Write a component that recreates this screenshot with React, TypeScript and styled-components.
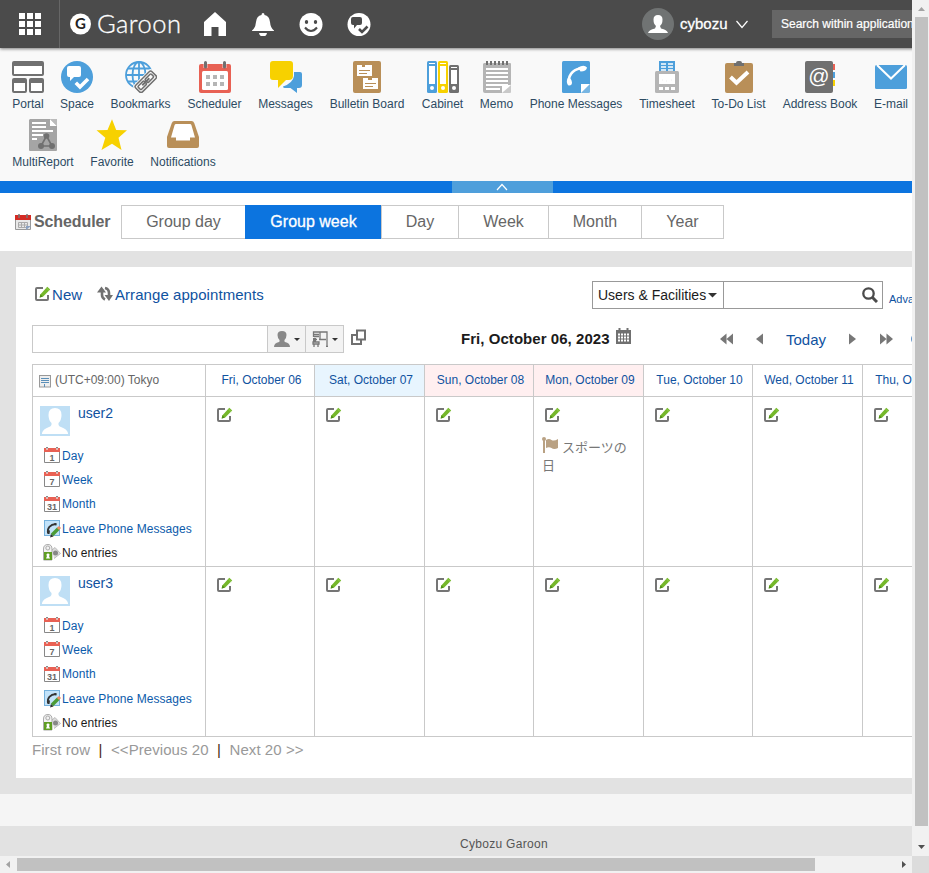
import React from "react";
import styled, { createGlobalStyle } from "styled-components";

const GlobalStyle = createGlobalStyle`
  * { box-sizing: border-box; }
  body { margin: 0; overflow: hidden; }
  svg { display: block; flex: none; }
`;

const Window = styled.div`
  width: 929px;
  height: 873px;
  display: grid;
  grid-template-columns: 912px 17px;
  grid-template-rows: 856px 17px;
  font-family: "Liberation Sans", Arial, "Noto Sans CJK JP", sans-serif;
  font-size: 12px;
  color: #1b1b1b;
  white-space: nowrap;
`;
const Page = styled.div`
  overflow: hidden;
  background: #f5f5f5;
`;

/* ---------- header ---------- */
const Header = styled.header`
  height: 48px;
  width: 1100px;
  display: flex;
  align-items: center;
  background: #4b4b4b;
  box-shadow: 0 1px 3px rgba(0, 0, 0, 0.5);
  position: relative;
`;
const AppsButton = styled.div`
  width: 60px;
  height: 48px;
  border-right: 1px solid #666;
  display: flex;
  align-items: center;
  justify-content: center;
`;
const Logo = styled.div`
  width: 133px;
  padding-left: 10px;
`;
const HeaderIcons = styled.div`
  display: flex;
  gap: 24px;
  padding-left: 10px;
  width: 449px;
`;
const UserName = styled.div`
  font-size: 15px;
  color: #fff;
  -webkit-text-stroke: 0.3px #fff;
  margin: 0 8px 0 6px;
  width: 48px;
  padding-bottom: 1px;
`;
const HeaderSearch = styled.div`
  height: 28px;
  width: 250px;
  margin-left: 24px;
  padding-left: 9px;
  line-height: 28px;
  background: #666;
  color: #fff;
  -webkit-text-stroke: 0.2px #fff;
`;

/* ---------- application menu ---------- */
const AppMenu = styled.nav`
  height: 133px;
  padding: 13px 0 0 4px;
  background: #f9f9f9;
`;
const AppRow = styled.div`
  display: flex;
  height: 58px;
`;
const AppItem = styled.div<{ $w: number }>`
  width: ${(p) => p.$w}px;
  flex: none;
  display: flex;
  flex-direction: column;
  align-items: center;
  color: #2d4b63;
  line-height: 14px;
  gap: 4px;
`;
const BlueBar = styled.div`
  height: 12px;
  background: #0c74df;
  padding-left: 452px;
`;
const Collapse = styled.div`
  width: 101px;
  height: 12px;
  background: #4f9fdb;
  display: flex;
  align-items: center;
  justify-content: center;
  padding-right: 2px;
`;

/* ---------- tabs ---------- */
const TitleBar = styled.div`
  height: 58px;
  display: flex;
  align-items: center;
  background: #fff;
  padding: 0 0 0 15px;
`;
const Title = styled.h1`
  width: 106px;
  margin: 0;
  display: flex;
  align-items: center;
  gap: 3px;
  font-size: 16px;
  letter-spacing: -0.1px;
  color: #666;
`;
const Tabs = styled.div`
  display: flex;
  height: 34px;
  border-right: 1px solid #c9c9c9;
`;
const Tab = styled.div<{ $w: number; $active?: boolean }>`
  width: ${(p) => p.$w}px;
  border: 1px solid ${(p) => (p.$active ? "#0c74df" : "#c9c9c9")};
  border-right: 0;
  background: ${(p) => (p.$active ? "#0c74df" : "#fff")};
  color: ${(p) => (p.$active ? "#fff" : "#666")};
  -webkit-text-stroke: ${(p) => (p.$active ? "0.3px #fff" : "0")};
  font-size: 16px;
  line-height: 32px;
  text-align: center;
`;

/* ---------- content ---------- */
const Body = styled.main`
  height: 543px;
  padding: 16px 0 0 16px;
  background: #e2e2e2;
`;
const Panel = styled.section`
  width: 1100px;
  height: 511px;
  padding: 14px 0 0 16px;
  background: #fff;
`;
const Row = styled.div<{ $h: number }>`
  display: flex;
  align-items: center;
  height: ${(p) => p.$h}px;
`;
const Action = styled.a<{ $w: number; $indent?: number }>`
  display: flex;
  align-items: center;
  gap: ${(p) => (p.$indent ? 1 : 2)}px;
  width: ${(p) => p.$w}px;
  padding: 0 0 2px ${(p) => p.$indent || 0}px;
  font-size: 15px;
  letter-spacing: 0.06px;
  color: #10529f;
`;
const SearchBox = styled.div`
  display: flex;
  width: 291px;
  height: 28px;
  border: 1px solid #999;
  margin-right: 6px;
`;
const SearchScope = styled.div`
  width: 131px;
  border-right: 1px solid #999;
  padding-left: 5px;
  display: flex;
  align-items: center;
  gap: 2px;
  font-size: 14px;
`;
const SearchField = styled.div`
  flex: 1;
  display: flex;
  justify-content: flex-end;
  padding: 5px 4px;
`;
const Advanced = styled.a`
  font-size: 11px;
  color: #10529f;
  padding-top: 8px;
`;
const Picker = styled.div`
  display: flex;
  width: 312px;
  height: 28px;
  border: 1px solid #c9c9c9;
  margin-right: 7px;
`;
const PickerInput = styled.div`
  flex: 1;
`;
const PickerButton = styled.div`
  width: 38px;
  border-left: 1px solid #c9c9c9;
  background: #f3f3f3;
  display: flex;
  align-items: center;
  justify-content: center;
  gap: 4px;
`;
const DateTitle = styled.h2`
  margin: 0 6px 2px 95px;
  width: 149px;
  font-size: 15px;
  letter-spacing: 0.05px;
`;
const WeekNav = styled.div`
  display: flex;
  align-items: center;
  margin-left: 88px;
  font-size: 15px;
  color: #10529f;
`;
const Today = styled.a`
  width: 86px;
  text-align: center;
  font-size: 15px;
  padding-top: 1px;
`;
const NavIcon = styled.div<{ $w: number }>`
  width: ${(p) => p.$w}px;
`;

const Calendar = styled.div`
  display: grid;
  grid-template-columns: 173px 109px 110px 109px 110px 109px 110px 109px 110px;
  grid-template-rows: 32px 170px 170px;
  border-bottom: 1px solid #c9c9c9;
  width: 1050px;
  margin-top: -5px;
`;
const HeadCell = styled.div<{ $tone?: string }>`
  border-left: 1px solid #c9c9c9;
  border-top: 1px solid #c9c9c9;
  background: ${(p) => p.$tone || "#fff"};
  color: #10529f;
  line-height: 30px;
  padding-left: 3px;
  text-align: center;
`;
const ZoneCell = styled(HeadCell)`
  display: flex;
  align-items: center;
  gap: 4px;
  padding-left: 6px;
  color: #666;
  line-height: 28px;
  padding-bottom: 1px;
  & svg { margin-top: 2px; }
`;
const Cell = styled.div`
  border-left: 1px solid #c9c9c9;
  border-top: 1px solid #c9c9c9;
  padding: 10px 8px 0 11px;
`;
const UserCell = styled(Cell)`
  padding: 9px 0 0 7px;
`;
const UserHead = styled.div`
  display: flex;
  gap: 8px;
  height: 37px;
  font-size: 14px;
  line-height: 15px;
  color: #10529f;
`;
const UserLink = styled.div<{ $plain?: boolean }>`
  display: flex;
  align-items: center;
  gap: 1px;
  height: 24.3px;
  padding: 1px 0 0 ${(p) => (p.$plain ? 3 : 4)}px;
  letter-spacing: 0.05px;
  color: ${(p) => (p.$plain ? "#1b1b1b" : "#0c5bab")};
`;
const Holiday = styled.div`
  margin: 14px 0 0 -3px;
  color: #777;
  font-size: 13px;
  line-height: 18px;
  white-space: normal;
  & svg { display: inline-block; vertical-align: -1px; margin-right: 3px; }
`;
const Pager = styled.div`
  display: flex;
  height: 26px;
  line-height: 26px;
  font-size: 15px;
  letter-spacing: 0.06px;
  color: #999;
`;
const Bar = styled.span`
  width: 21px;
  text-align: center;
  color: #4a2a10;
`;
const Footer = styled.footer`
  margin-top: 32px;
  height: 30px;
  padding-left: 460px;
  line-height: 37px;
  font-size: 12px;
  letter-spacing: 0.3px;
  background: #e2e2e2;
  color: #555;
`;

/* ---------- scroll bars ---------- */
const VBar = styled.div`
  background: #f1f1f1;
  display: flex;
  flex-direction: column;
  align-items: center;
  justify-content: space-between;
  padding-left: 1px;
`;
const VThumb = styled.div`
  width: 13px;
  height: 809px;
  background: #c1c1c1;
`;
const HBar = styled.div`
  background: #f1f1f1;
  display: flex;
  align-items: center;
`;
const HThumb = styled.div`
  width: 798px;
  height: 13px;
  background: #c1c1c1;
`;
const Corner = styled.div`
  background: #dcdcdc;
`;

/* ---------- icons ---------- */
const Svg = ({ w = 32, h = 32, children }: { w?: number; h?: number; children: React.ReactNode }) => (
  <svg width={w} height={h} viewBox={`0 0 ${w} ${h}`} fill="none">{children}</svg>
);

const Caret = ({ w = 6, c = "#333" }) => (
  <Svg w={w} h={Math.ceil(w / 2)}><path d={`M0 0H${w}L${w / 2} ${w / 2}z`} fill={c} /></Svg>
);

const Edit = () => (
  <Svg w={16} h={16}>
    <path d="M8 2H2Q1 2 1 3V13Q1 14 2 14H12Q13 14 13 13V9" stroke="#757575" strokeWidth="2" />
    <path d="M5.500 8.200L12.300 .8L15.200 3.500L8.200 10.500L4.600 11.500z" fill="#75b82a" />
    <path d="M5.500 8.200L7.800 10.700L4.600 11.500z" fill="#4e8d16" />
    <path d="M11.200 1.800L14.200 4.700" stroke="#a0d368" strokeWidth=".7" />
  </Svg>
);

const portal = (
  <Svg>
    <g stroke="#707070" strokeWidth="2">
      <rect x="1" y="1" width="30" height="13" rx="1" /><path d="M1 3H31" strokeWidth="4" />
      <rect x="1" y="18" width="13" height="13" rx="1" /><path d="M1 20H14" strokeWidth="4" />
      <rect x="18" y="18" width="13" height="13" rx="1" /><path d="M18 20H31" strokeWidth="4" />
    </g>
    <path d="M2 5H30V13H2zM2 22H13V30H2zM19 22H30V30H19z" fill="#fff" />
  </Svg>
);
const space = (
  <Svg>
    <circle cx="16" cy="16" r="16" fill="#4d9fdb" />
    <path d="M8 5H18Q20 5 20 7V14Q20 16 18 16H13L9 20V16H8Q6 16 6 14V7Q6 5 8 5z" fill="#fff" />
    <path d="M14.800 21.800L19 26L27 18" stroke="#fff" strokeWidth="3.600" />
  </Svg>
);
const bookmarks = (
  <Svg>
    <g stroke="#4d9fdb" strokeWidth="1.800">
      <circle cx="14" cy="14" r="13" /><ellipse cx="14" cy="14" rx="6.500" ry="13" />
      <path d="M14 1V27M1 14H27M3 7.500H25M3 20.500H20" />
    </g>
    <g transform="rotate(-45 21 21)">
      <rect x="8" y="14.500" width="26" height="12" rx="2.500" fill="#f9f9f9" />
      <g stroke="#707070" strokeWidth="1.500">
        <rect x="9.500" y="16" width="23" height="9.500" rx="2" />
        <rect x="11.800" y="18.400" width="8.500" height="4.600" rx="1" /><rect x="21.800" y="18.400" width="8.500" height="4.600" rx="1" />
        <path d="M16 20.700H26" strokeWidth="2" />
      </g>
    </g>
  </Svg>
);
const scheduler = (
  <Svg>
    <rect y="3" width="32" height="29" rx="2" fill="#e86154" />
    <rect x="3" y="10" width="26" height="19" rx="1.500" fill="#fff" />
    <path d="M6.500 0V7M25.500 0V7" stroke="#f9f9f9" strokeWidth="4.500" opacity=".5" />
    <path d="M6.500 1.500V6M25.500 1.500V6" stroke="#707070" strokeWidth="3" strokeLinecap="round" />
    <path d="M7 14h4v4H7zM14 14h4v4h-4zM21 14h4v4h-4zM7 21h4v4H7zM14 21h4v4h-4zM21 21h4v4h-4z" fill="#b5b5b5" />
  </Svg>
);
const messages = (
  <Svg>
    <path d="M24 11H30Q32 11 32 13V24Q32 27 29 27H27V32L20.500 27H16Q13 27 13 25.500Q23 22 24 15z" fill="#4d9fdb" />
    <path d="M3 0H20Q23 0 23 3V15Q23 19 19 19H16L8 27V19H3Q0 19 0 16V3Q0 0 3 0z" fill="#f7d100" />
  </Svg>
);
const bulletin = (
  <Svg w={28}>
    <rect width="28" height="32" rx="2" fill="#b98f58" />
    <path d="M4 4H9V6H12V4H19V15H4zM10 17H15V19H19V17H25V28H10z" fill="#fff" />
    <path d="M6 9.500H17M6 12.500H14M12 22.500H23M12 25.500H20" stroke="#b98f58" />
  </Svg>
);
const binder = (x: number, y: number, c: string) => (
  <g key={x}>
    <rect x={x} y={y} width="10" height={32 - y} rx="1.500" fill={c} />
    <path d={`M${x + 2} ${y + 2.5}h6`} stroke="#fff" />
    <path d={`M${x + 2} ${y + 5}h6V23h-6z`} fill="#fff" />
    <circle cx={x + 5} cy="27" r="2" fill="#fff" />
  </g>
);
const cabinet = <Svg>{binder(0, 0, "#4d9fdb")}{binder(11, 0, "#f7d100")}{binder(22, 4, "#707070")}</Svg>;
const memo = (
  <Svg w={28}>
    <path d="M1 2H27Q28 2 28 3V24L20 32H2Q0 32 0 30V3z" fill="#b5b5b5" />
    <path d="M19 32L28 23V31Q28 32 27 32z" fill="#c9c9c9" />
    <path d="M28 24L19 32V25Q19 24 20 24z" fill="#fff" />
    <path d="M3 8H25M3 12H25M3 16H25M3 20H25M3 24H25M3 28H17" stroke="#fff" strokeWidth="2" />
    <path d="M4 0V4M8 0V4M12 0V4M16 0V4M20 0V4M24 0V4" stroke="#707070" strokeWidth="2" />
  </Svg>
);
const phone = (
  <Svg w={28}>
    <rect width="28" height="32" rx="1.500" fill="#4d9fdb" />
    <path d="M6.500 21C7 13 12 7.500 22 7" stroke="#fff" strokeWidth="2.600" />
    <path d="M16 6.500Q22 3 25 6.500Q24.500 10.500 18.500 10.500zM5.500 17.500Q9 15.500 10 21.500Q10 25 6.500 24.500Q3.800 22 5.500 17.500z" fill="#fff" />
    <path d="M19 23H28L19 32z" fill="#fff" /><path d="M28 23V32H19z" fill="#f9f9f9" opacity=".25" />
  </Svg>
);
const timesheet = (
  <Svg w={24}>
    <path d="M4 0H20V10H4z" fill="#4d9fdb" />
    <path d="M6 3H11M13 3H18M6 6H11M13 6H18M6 9H11M13 9H18" stroke="#fff" strokeWidth="1.500" />
    <rect y="10" width="24" height="22" rx="1.500" fill="#b5b5b5" />
    <path d="M4 13H20V23H4zM4 26h4v3H4zM10 26h4v3h-4zM16 26h4v3h-4z" fill="#fff" />
    <path d="M7 19h1M11 20h1M16 19h1" stroke="#eee" />
  </Svg>
);
const todo = (
  <Svg w={28}>
    <rect y="2" width="28" height="30" rx="2" fill="#b98f58" />
    <path d="M9 2H11Q11 0 13 0H15Q17 0 17 2H19V5H9z" fill="#707070" />
    <path d="M5.500 16L11.500 21.700L23 11" stroke="#fff" strokeWidth="4" />
  </Svg>
);
const AtText = styled.text`
  font: 21px "Liberation Sans", sans-serif;
  fill: #fff;
`;
const address = (
  <Svg w={30}>
    <path d="M27 3h3v6h-3z" fill="#e86154" /><path d="M27 11h3v6h-3z" fill="#4d9fdb" /><path d="M27 19h3v6h-3z" fill="#f7d100" />
    <rect width="28" height="32" rx="2" fill="#707070" />
    <AtText x="14" y="22" textAnchor="middle">@</AtText>
  </Svg>
);
const email = (
  <Svg>
    <rect y="4" width="32" height="24" rx="1.500" fill="#4d9fdb" />
    <path d="M2 4L16 17.500L30 4" stroke="#fff" strokeWidth="2" />
  </Svg>
);
const multireport = (
  <Svg w={28}>
    <path d="M1 0H28V31Q28 32 27 32H1Q0 32 0 31V1z" fill="#a5a5a5" />
    <path d="M21 0V7H28z" fill="#fff" /><path d="M21 0H28V7z" fill="#bbb" />
    <path d="M3 4H17M3 8H17M3 12H24M3 16H14M3 20H8" stroke="#fff" strokeWidth="2" />
    <path d="M17.500 17L12 27H23z" stroke="#707070" strokeWidth="1.600" />
    <g fill="#707070"><circle cx="17.500" cy="17" r="2.800" /><circle cx="12" cy="27" r="3" /><circle cx="23" cy="27" r="3" /></g>
  </Svg>
);
const favorite = (
  <Svg><path d="M16 .3L20.200 11L31 11.300L22.500 18.800L25.500 31L16 24.800L5.500 31L9.300 18.800L.5 11.300L11.500 11z" fill="#f7d100" /></Svg>
);
const notifications = (
  <Svg>
    <path d="M7.500 2H24.500Q26.500 2 27.200 4L32 18V27Q32 29 30 29H2Q0 29 0 27V18L4.800 4Q5.500 2 7.500 2z" fill="#b98f58" />
    <path d="M9 5H23Q24 5 24.400 6L28 18.500H23V21.500H9V18.500H4L7.600 6Q8 5 9 5z" fill="#fff" />
  </Svg>
);

const appRows: [string, number, React.ReactNode][][] = [
  [
    ["Portal", 48, portal], ["Space", 50, space], ["Bookmarks", 77, bookmarks], ["Scheduler", 71, scheduler],
    ["Messages", 71, messages], ["Bulletin Board", 92, bulletin], ["Cabinet", 59, cabinet], ["Memo", 49, memo],
    ["Phone Messages", 110, phone], ["Timesheet", 72, timesheet], ["To-Do List", 71, todo],
    ["Address Book", 92, address], ["E-mail", 50, email],
  ],
  [["MultiReport", 78, multireport], ["Favorite", 60, favorite], ["Notifications", 82, notifications]],
];

const LogoText = styled.text`
  font: 300 25.500px Lato, sans-serif;
  fill: #fff;
  stroke: #fff;
  stroke-width: 0.3px;
`;
const LogoMark = styled.text`
  font: bold 15px Lato, sans-serif;
  fill: #222;
`;
const GaroonLogo = () => (
  <Svg w={114} h={32}>
    <circle cx="10.500" cy="16" r="10.500" fill="#fff" />
    <LogoMark x="10.500" y="21.300" textAnchor="middle">G</LogoMark>
    <LogoText x="27" y="25" textLength="84">Garoon</LogoText>
  </Svg>
);

const Avatar = () => (
  <Svg w={30} h={30}>
    <rect width="30" height="30" fill="#bfdff5" />
    <path d="M2 30V27Q3 23 9 21Q12 20 11.500 17Q8.500 14 8.500 9Q8.500 2 15 2Q21.500 2 21.500 9Q21.500 14 18.500 17Q18 20 21 21Q27 23 28 27V30z" fill="#fff" />
    <path d="M0 28H30V30H0z" fill="#bfdff5" />
  </Svg>
);

const MiniText = styled.text<{ $size: number }>`
  font: bold ${(p) => p.$size}px "Liberation Sans", sans-serif;
  fill: #666;
`;
const MiniCal = ({ n }: { n: string }) => (
  <Svg w={17} h={17}>
    <path d="M.5 3V15.500H15.500V3" stroke="#888" fill="#fff" />
    <path d="M0 1H16V5H0z" fill="#e86154" />
    <path d="M3 0V2M13 0V2" stroke="#888" strokeWidth="2" /><path d="M3 1V3M13 1V3" stroke="#fff" />
    <MiniText $size={9} x="8" y="13.800" textAnchor="middle">{n}</MiniText>
  </Svg>
);
const LeavePhone = () => (
  <Svg w={17} h={18}>
    <rect x=".5" y=".5" width="15" height="15" fill="#c3e3fa" stroke="#76b1dc" />
    <path d="M4 13C3 8 6 4.500 12 4" stroke="#333" strokeWidth="1.800" /><path d="M10 3L13 3.500L12 6zM3 10L6 10.500L5.500 14L3.500 14z" fill="#333" />
    <path d="M8 15L14.500 8.500" stroke="#4b9b38" strokeWidth="3.500" /><path d="M14 9L16 7" stroke="#ef8b63" strokeWidth="3" />
    <path d="M6 17.500L7 14L9.500 16.500z" fill="#333" />
  </Svg>
);
const Presence = () => (
  <Svg w={18} h={17}>
    <path d="M9 6L12 3.500L17.500 9.500L11 14.500" fill="#ddd" stroke="#bbb" /><circle cx="12.500" cy="9" r="2.500" fill="#888" />
    <path d="M.5 16V5Q.5 .5 5 .5Q9 .5 9 5V16z" fill="#f2f2f2" stroke="#aaa" />
    <circle cx="4.800" cy="4" r="2" stroke="#aaa" />
    <rect x="1" y="8" width="8" height="8" fill="#5f9e22" />
    <path d="M5 9.500A1.400 1.400 0 0 1 6 12L7 14.500H3L4 12A1.400 1.400 0 0 1 5 9.500z" fill="#fff" />
  </Svg>
);

const PersonShape = ({ c }: { c: string }) => (
  <path d="M0 16Q0 12 5 11Q6 10.500 5.500 9Q3.500 7 3.500 4Q3.500 0 8 0Q12.500 0 12.500 4Q12.500 7 10.500 9Q10 10.500 11 11Q16 12 16 16z" fill={c} />
);

const days: [string, string?][] = [
  ["Fri, October 06"], ["Sat, October 07", "#e8f5fe"], ["Sun, October 08", "#ffeff0"], ["Mon, October 09", "#ffeff0"],
  ["Tue, October 10"], ["Wed, October 11"], ["Thu, October 12"], ["Fri, October 13"],
];

const UserRow = ({ name, holiday }: { name: string; holiday?: number }) => (
  <>
    <UserCell>
      <UserHead><Avatar />{name}</UserHead>
      <UserLink><MiniCal n="1" />Day</UserLink>
      <UserLink><MiniCal n="7" />Week</UserLink>
      <UserLink><MiniCal n="31" />Month</UserLink>
      <UserLink><LeavePhone />Leave Phone Messages</UserLink>
      <UserLink $plain><Presence />No entries</UserLink>
    </UserCell>
    {days.map(([d], i) => (
      <Cell key={d}>
        <Edit />
        {holiday === i && (
          <Holiday>
            <Svg w={17} h={16}>
              <path d="M2 2V16" stroke="#b9a183" strokeWidth="2" /><circle cx="2" cy="2" r="2" fill="#b9a183" />
              <path d="M4 3Q7 1 9.500 3Q12 4.500 16 2V11Q12 13 9.500 11Q7 9.500 4 11z" fill="#b9a183" />
            </Svg>
            スポーツの日
          </Holiday>
        )}
      </Cell>
    ))}
  </>
);

export default function App() {
  return (
    <>
      <GlobalStyle />
      <Window>
        <Page>
          <Header>
            <AppsButton>
              <Svg w={22} h={22}>
                <path d="M0 0h6v6H0zM8 0h6v6H8zM16 0h6v6h-6zM0 8h6v6H0zM8 8h6v6H8zM16 8h6v6h-6zM0 16h6v6H0zM8 16h6v6H8zM16 16h6v6h-6z" fill="#fff" />
              </Svg>
            </AppsButton>
            <Logo><GaroonLogo /></Logo>
            <HeaderIcons>
              <Svg w={24} h={24}><path d="M12 0L23 10V24H15.500V15H8.500V24H1V10z" fill="#fff" /></Svg>
              <Svg w={24} h={24}>
                <path d="M12 1Q13.500 1 13.500 3Q18.500 4 19 10Q19.500 16 23 18.500V19H1V18.500Q4.500 16 5 10Q5.500 4 10.500 3Q10.500 1 12 1zM8 21H16Q15.500 24.500 12 24.500Q8.500 24.500 8 21z" fill="#fff" />
              </Svg>
              <Svg w={24} h={24}>
                <circle cx="12" cy="12.500" r="11.500" fill="#fff" />
                <ellipse cx="7.500" cy="10" rx="1.700" ry="2" fill="#4b4b4b" /><ellipse cx="16.500" cy="10" rx="1.700" ry="2" fill="#4b4b4b" />
                <path d="M6 15.500Q12 22.500 18 15.500" stroke="#4b4b4b" strokeWidth="2" />
              </Svg>
              <Svg w={24} h={24}>
                <circle cx="12" cy="12.500" r="11.500" fill="#fff" />
                <path d="M6 5H13Q15 5 15 7V11Q15 13 13 13H10L7 16.500V13H6Q4 13 4 11V7Q4 5 6 5z" fill="#4b4b4b" />
                <path d="M12 17L15 20L20.500 14.500" stroke="#4b4b4b" strokeWidth="2.600" />
              </Svg>
            </HeaderIcons>
            <Svg>
              <circle cx="16" cy="16" r="16" fill="#707373" />
              <path d="M6 25Q7 21.500 13 20.500L14 18Q11.500 16 11.500 11.500Q11.500 7 16 7Q20.500 7 20.500 11.500Q20.500 16 18 18L19 20.500Q25 21.500 26 25z" fill="#fff" />
            </Svg>
            <UserName>cybozu</UserName>
            <Svg w={12} h={9}><path d="M.5 1L6 7.500L11.500 1" stroke="#fff" strokeWidth="1.200" /></Svg>
            <HeaderSearch>Search within applications</HeaderSearch>
          </Header>
          <AppMenu>
            {appRows.map((row, i) => (
              <AppRow key={i}>
                {row.map(([label, w, icon]) => <AppItem key={label} $w={w}>{icon}{label}</AppItem>)}
              </AppRow>
            ))}
          </AppMenu>
          <BlueBar><Collapse><Svg w={12} h={8}><path d="M1 7L6 1.500L11 7" stroke="#fff" strokeWidth="1.200" /></Svg></Collapse></BlueBar>
          <TitleBar>
            <Title>
              <Svg w={16} h={16}>
                <path d="M.5 2.500H15.500V15.500H.5z" fill="#e9e9e9" stroke="#999" />
                <path d="M0 1H16V6H0z" fill="#d42b24" />
                <path d="M4 0V4M12 0V4" stroke="#777" strokeWidth="1.500" />
                <path d="M3.500 8.500H12.500V13.500H3.500zM3.500 11H12.500M6.500 8.500V13.500M9.500 8.500V13.500" stroke="#aaa" />
                <path d="M11 16V12H16z" fill="#8aa0c0" />
              </Svg>
              Scheduler
            </Title>
            <Tabs>
              <Tab $w={124}>Group day</Tab>
              <Tab $w={136} $active>Group week</Tab>
              <Tab $w={77}>Day</Tab>
              <Tab $w={90}>Week</Tab>
              <Tab $w={93}>Month</Tab>
              <Tab $w={82}>Year</Tab>
            </Tabs>
          </TitleBar>
          <Body>
            <Panel>
              <Row $h={28}>
                <Action $w={65} $indent={3}><Edit />New</Action>
                <Action $w={495}>
                  <Svg w={16} h={16}>
                    <path d="M5 3V9Q5 12 8 13.500" stroke="#707070" strokeWidth="2.600" /><path d="M0 6.500L4.500 .5L9 6.500z" fill="#707070" />
                    <path d="M8 2Q12 3 12 7V10" stroke="#707070" strokeWidth="2.600" /><path d="M7.500 9H16L12 15z" fill="#707070" />
                  </Svg>
                  Arrange appointments
                </Action>
                <SearchBox>
                  <SearchScope>Users &amp; Facilities<Caret w={9} /></SearchScope>
                  <SearchField>
                    <Svg w={16} h={16}><circle cx="6.500" cy="6.500" r="5.200" stroke="#4b4b4b" strokeWidth="2.300" /><path d="M10 10L15 15" stroke="#4b4b4b" strokeWidth="3" /></Svg>
                  </SearchField>
                </SearchBox>
                <Advanced>Advanced search</Advanced>
              </Row>
              <Row $h={60}>
                <Picker>
                  <PickerInput />
                  <PickerButton><Svg w={16} h={16}><PersonShape c="#888" /></Svg><Caret /></PickerButton>
                  <PickerButton>
                    <Svg w={16} h={16}>
                      <path d="M1.500 6V1H15V15M14 15.500H16M7 8.500H14M8 1V8M2 3.500H7M2 5.500H7M1 8.500H5M1 11H7V13H1zM2 13V16M6 13V16" stroke="#777" strokeWidth="1.300" />
                      <path d="M1 7H4V11H1z" fill="#777" />
                    </Svg>
                    <Caret />
                  </PickerButton>
                </Picker>
                <Svg w={15} h={20}><path d="M5 6H1V15H10V11" stroke="#707070" strokeWidth="2" /><rect x="6" y="1.500" width="8" height="9" stroke="#707070" strokeWidth="2" /></Svg>
                <DateTitle>Fri, October 06, 2023</DateTitle>
                <Svg w={16} h={22}>
                  <path d="M0 2H15V16H0z" fill="#707070" /><path d="M3.500 0V4M11.500 0V4" stroke="#707070" strokeWidth="2" />
                  <path d="M2 6.500H13M2 9.500H13M2 12.500H13" stroke="#fff" strokeWidth="2" strokeDasharray="2 1" />
                </Svg>
                <WeekNav>
                  <NavIcon $w={36}><Svg w={13} h={12}><path d="M6.500 .5V11.500L0 6zM13 .5V11.500L6.500 6z" fill="#777" /></Svg></NavIcon>
                  <NavIcon $w={7}><Svg w={7} h={12}><path d="M7 .5V11.500L0 6z" fill="#777" /></Svg></NavIcon>
                  <Today>Today</Today>
                  <NavIcon $w={31}><Svg w={7} h={12}><path d="M0 .5V11.500L7 6z" fill="#777" /></Svg></NavIcon>
                  <NavIcon $w={31}><Svg w={13} h={12}><path d="M0 .5V11.500L6.500 6zM6.500 .5V11.500L13 6z" fill="#777" /></Svg></NavIcon>
                  <Svg w={14} h={14}><circle cx="7" cy="7" r="6" stroke="#2c6db3" strokeWidth="1.500" /></Svg>
                </WeekNav>
              </Row>
              <Calendar>
                <ZoneCell>
                  <Svg w={12} h={13}>
                    <rect x=".5" y=".5" width="11" height="11.500" stroke="#999" fill="#eee" />
                    <path d="M2 3.500H10M2 5.500H10M2 7.500H10M5.500 9V12" stroke="#5b8fb8" />
                  </Svg>
                  (UTC+09:00) Tokyo
                </ZoneCell>
                {days.map(([d, tone]) => <HeadCell key={d} $tone={tone}>{d}</HeadCell>)}
                <UserRow name="user2" holiday={3} />
                <UserRow name="user3" />
              </Calendar>
              <Pager>
                First row<Bar>|</Bar>&lt;&lt;Previous 20<Bar>|</Bar>Next 20 &gt;&gt;
              </Pager>
            </Panel>
          </Body>
          <Footer>Cybozu Garoon</Footer>
        </Page>
        <VBar>
          <Svg w={17} h={17}><path d="M5 11H12L8.500 7z" fill="#a3a3a3" /></Svg>
          <VThumb />
          <Svg w={17} h={30}><path d="M5 19H12L8.500 23z" fill="#505050" /></Svg>
        </VBar>
        <HBar>
          <Svg w={17} h={17}><path d="M10 5V12L6 8.500z" fill="#a3a3a3" /></Svg>
          <HThumb />
          <Svg w={97} h={17}><path d="M87 5V12L91 8.500z" fill="#505050" /></Svg>
        </HBar>
        <Corner />
      </Window>
    </>
  );
}
